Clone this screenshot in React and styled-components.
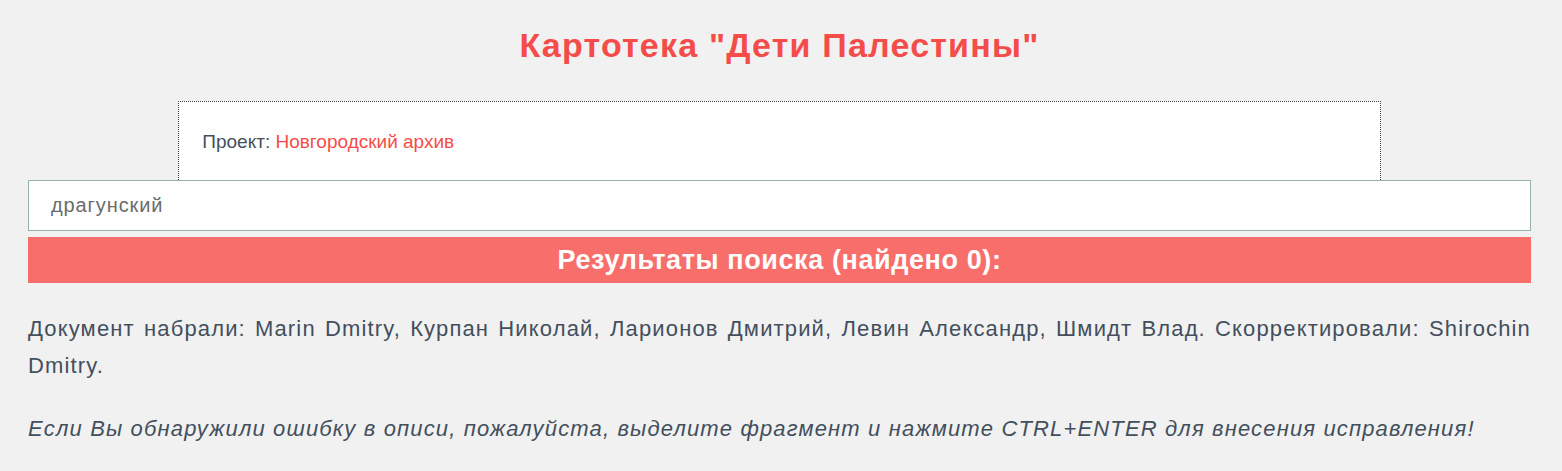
import styled, { createGlobalStyle } from "styled-components";

const GlobalStyle = createGlobalStyle`
    html, body {
        margin: 0;
        padding: 0;
        background: #f1f1f1;
    }
    body {
        font-family: "Liberation Sans", Arial, sans-serif;
        color: #434f5c;
    }
`;

const Page = styled.div`
    width: 1503px;
    margin: 0 0 0 28px;
`;

const Title = styled.h1`
    margin: 0;
    padding-top: 25px;
    height: 101px;
    box-sizing: border-box;
    text-align: center;
    font-size: 34px;
    letter-spacing: 1.2px;
    font-weight: bold;
    line-height: 40px;
    color: #f54c4a;
`;

const ProjectBox = styled.div`
    width: 80%;
    margin: 0 auto;
    box-sizing: border-box;
    height: 79px;
    padding: 29px 23px 0;
    background: #fff;
    border: 1px dotted #444;
    border-bottom: none;
    font-size: 19px;
    line-height: 22px;
    color: #434f5c;

    & a {
        color: #f54c4a;
        text-decoration: none;
    }
`;

const SearchInput = styled.input`
    display: block;
    width: 100%;
    box-sizing: border-box;
    height: 51px;
    margin: 0;
    padding: 0 22px;
    border: 1px solid #96b0b0;
    background: #fff;
    font-family: "Liberation Sans", Arial, sans-serif;
    font-size: 20px;
    letter-spacing: 0.9px;
    color: #6b6b6b;
    outline: none;
`;

const ResultsBar = styled.div`
    margin-top: 6px;
    height: 46px;
    background: #f86e6b;
    color: #fff;
    font-size: 27px;
    letter-spacing: 0.6px;
    font-weight: bold;
    line-height: 46px;
    text-align: center;
`;

const Paragraph = styled.p`
    margin: ${(p) => (p.$first ? "27px" : "26px")} 0 0;
    font-size: 22px;
    letter-spacing: 1.15px;
    line-height: 37px;
    text-align: justify;
    font-style: ${(p) => (p.$italic ? "italic" : "normal")};
`;

export default function App() {
    return (
        <>
            <GlobalStyle />
            <Page>
                <Title>Картотека "Дети Палестины"</Title>
                <ProjectBox>
                    Проект: <a href="#">Новгородский архив</a>
                </ProjectBox>
                <SearchInput defaultValue="драгунский" />
                <ResultsBar>Результаты поиска (найдено 0):</ResultsBar>
                <Paragraph $first>
                    Документ набрали: Marin Dmitry, Курпан Николай, Ларионов
                    Дмитрий, Левин Александр, Шмидт Влад. Скорректировали:
                    Shirochin Dmitry.
                </Paragraph>
                <Paragraph $italic>
                    Если Вы обнаружили ошибку в описи, пожалуйста, выделите
                    фрагмент и нажмите CTRL+ENTER для внесения исправления!
                </Paragraph>
            </Page>
        </>
    );
}
